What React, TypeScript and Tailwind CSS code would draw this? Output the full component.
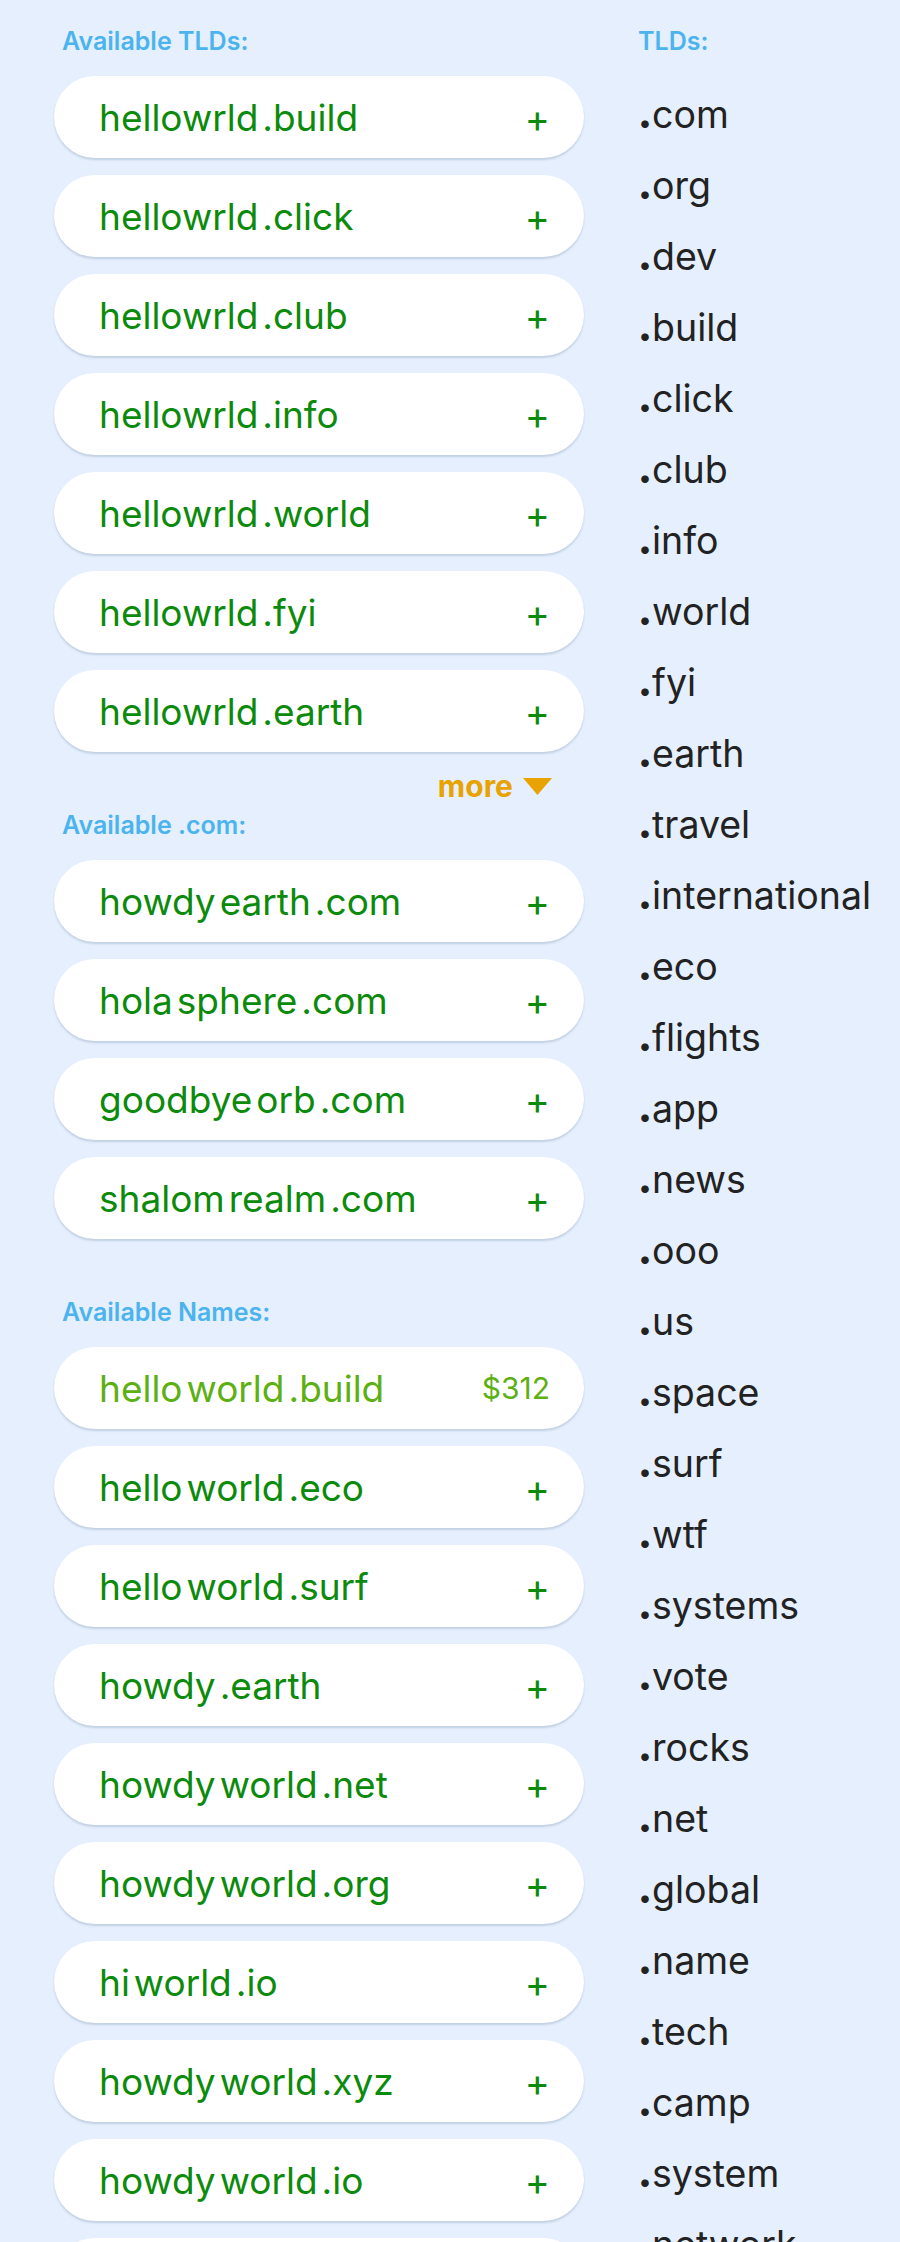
import React from "react"

type Name = { parts: string[]; price?: string }

const tldNames: Name[] = [
  { parts: ["hellowrld", ".build"] },
  { parts: ["hellowrld", ".click"] },
  { parts: ["hellowrld", ".club"] },
  { parts: ["hellowrld", ".info"] },
  { parts: ["hellowrld", ".world"] },
  { parts: ["hellowrld", ".fyi"] },
  { parts: ["hellowrld", ".earth"] },
]

const comNames: Name[] = [
  { parts: ["howdy", "earth", ".com"] },
  { parts: ["hola", "sphere", ".com"] },
  { parts: ["goodbye", "orb", ".com"] },
  { parts: ["shalom", "realm", ".com"] },
]

const otherNames: Name[] = [
  { parts: ["hello", "world", ".build"], price: "$312" },
  { parts: ["hello", "world", ".eco"] },
  { parts: ["hello", "world", ".surf"] },
  { parts: ["howdy", ".earth"] },
  { parts: ["howdy", "world", ".net"] },
  { parts: ["howdy", "world", ".org"] },
  { parts: ["hi", "world", ".io"] },
  { parts: ["howdy", "world", ".xyz"] },
  { parts: ["howdy", "world", ".io"] },
  { parts: ["hello", "world", ".net"] },
]

const tlds = [
  "com", "org", "dev", "build", "click", "club", "info", "world", "fyi", "earth",
  "travel", "international", "eco", "flights", "app", "news", "ooo", "us", "space",
  "surf", "wtf", "systems", "vote", "rocks", "net", "global", "name", "tech", "camp",
  "system", "network", "online",
]

const NamePill: React.FC<{ name: Name }> = ({ name }) => {
  const premium = !!name.price
  return (
    <div className="flex h-[82px] items-center justify-between rounded-full bg-white pl-[45px] pr-[34px] shadow-[0_2px_2px_rgba(90,120,150,0.25)]">
      <div className={`flex gap-[4px] text-[37px] leading-none ${premium ? "text-[#5db014]" : "text-[#0b8a0b]"}`}>
        {name.parts.map((p, i) => (
          <span key={i}>{p}</span>
        ))}
      </div>
      {premium ? (
        <span className="text-[30px] leading-none text-[#5db014]">{name.price}</span>
      ) : (
        <span className="mt-[1px] text-[38px] leading-none text-[#0b8a0b]">+</span>
      )}
    </div>
  )
}

const Section: React.FC<{ title: string; names: Name[]; more?: boolean }> = ({ title, names, more }) => (
  <div>
    <h2 className="ml-2 text-[25px] font-semibold leading-[30px] text-[#4bb4ef]">{title}</h2>
    <div className="mt-5 flex flex-col gap-[17px]">
      {names.map((n, i) => (
        <NamePill key={i} name={n} />
      ))}
    </div>
    <div className="mt-4 mb-[6px] flex h-[36px] items-center justify-end pr-8">
      {more && (
        <button className="flex items-center gap-[10px] text-[30px] font-bold leading-[36px] text-[#e8a300]">
          more
          <svg width="29" height="17" viewBox="0 0 29 17">
            <path d="M0 0 H29 L14.5 17 Z" fill="#e8a300" />
          </svg>
        </button>
      )}
    </div>
  </div>
)

export default function App() {
  return (
    <div className="h-[2242px] overflow-hidden bg-[#e5effd] font-['Inter','Noto_Sans',sans-serif]">
      <div className="flex pt-[26px]">
        <div className="ml-[54px] w-[530px] shrink-0">
          <Section title="Available TLDs:" names={tldNames} more />
          <Section title="Available .com:" names={comNames} />
          <Section title="Available Names:" names={otherNames} />
        </div>
        <div className="ml-[54px]">
          <h2 className="text-[25px] font-semibold leading-[30px] text-[#4bb4ef]">TLDs:</h2>
          <ul className="mt-[23px]">
            {tlds.map((t) => (
              <li key={t} className="text-[37.5px] leading-[71px] text-[#222222]">
                <span className="font-black">.</span>
                {t}
              </li>
            ))}
          </ul>
        </div>
      </div>
    </div>
  )
}
